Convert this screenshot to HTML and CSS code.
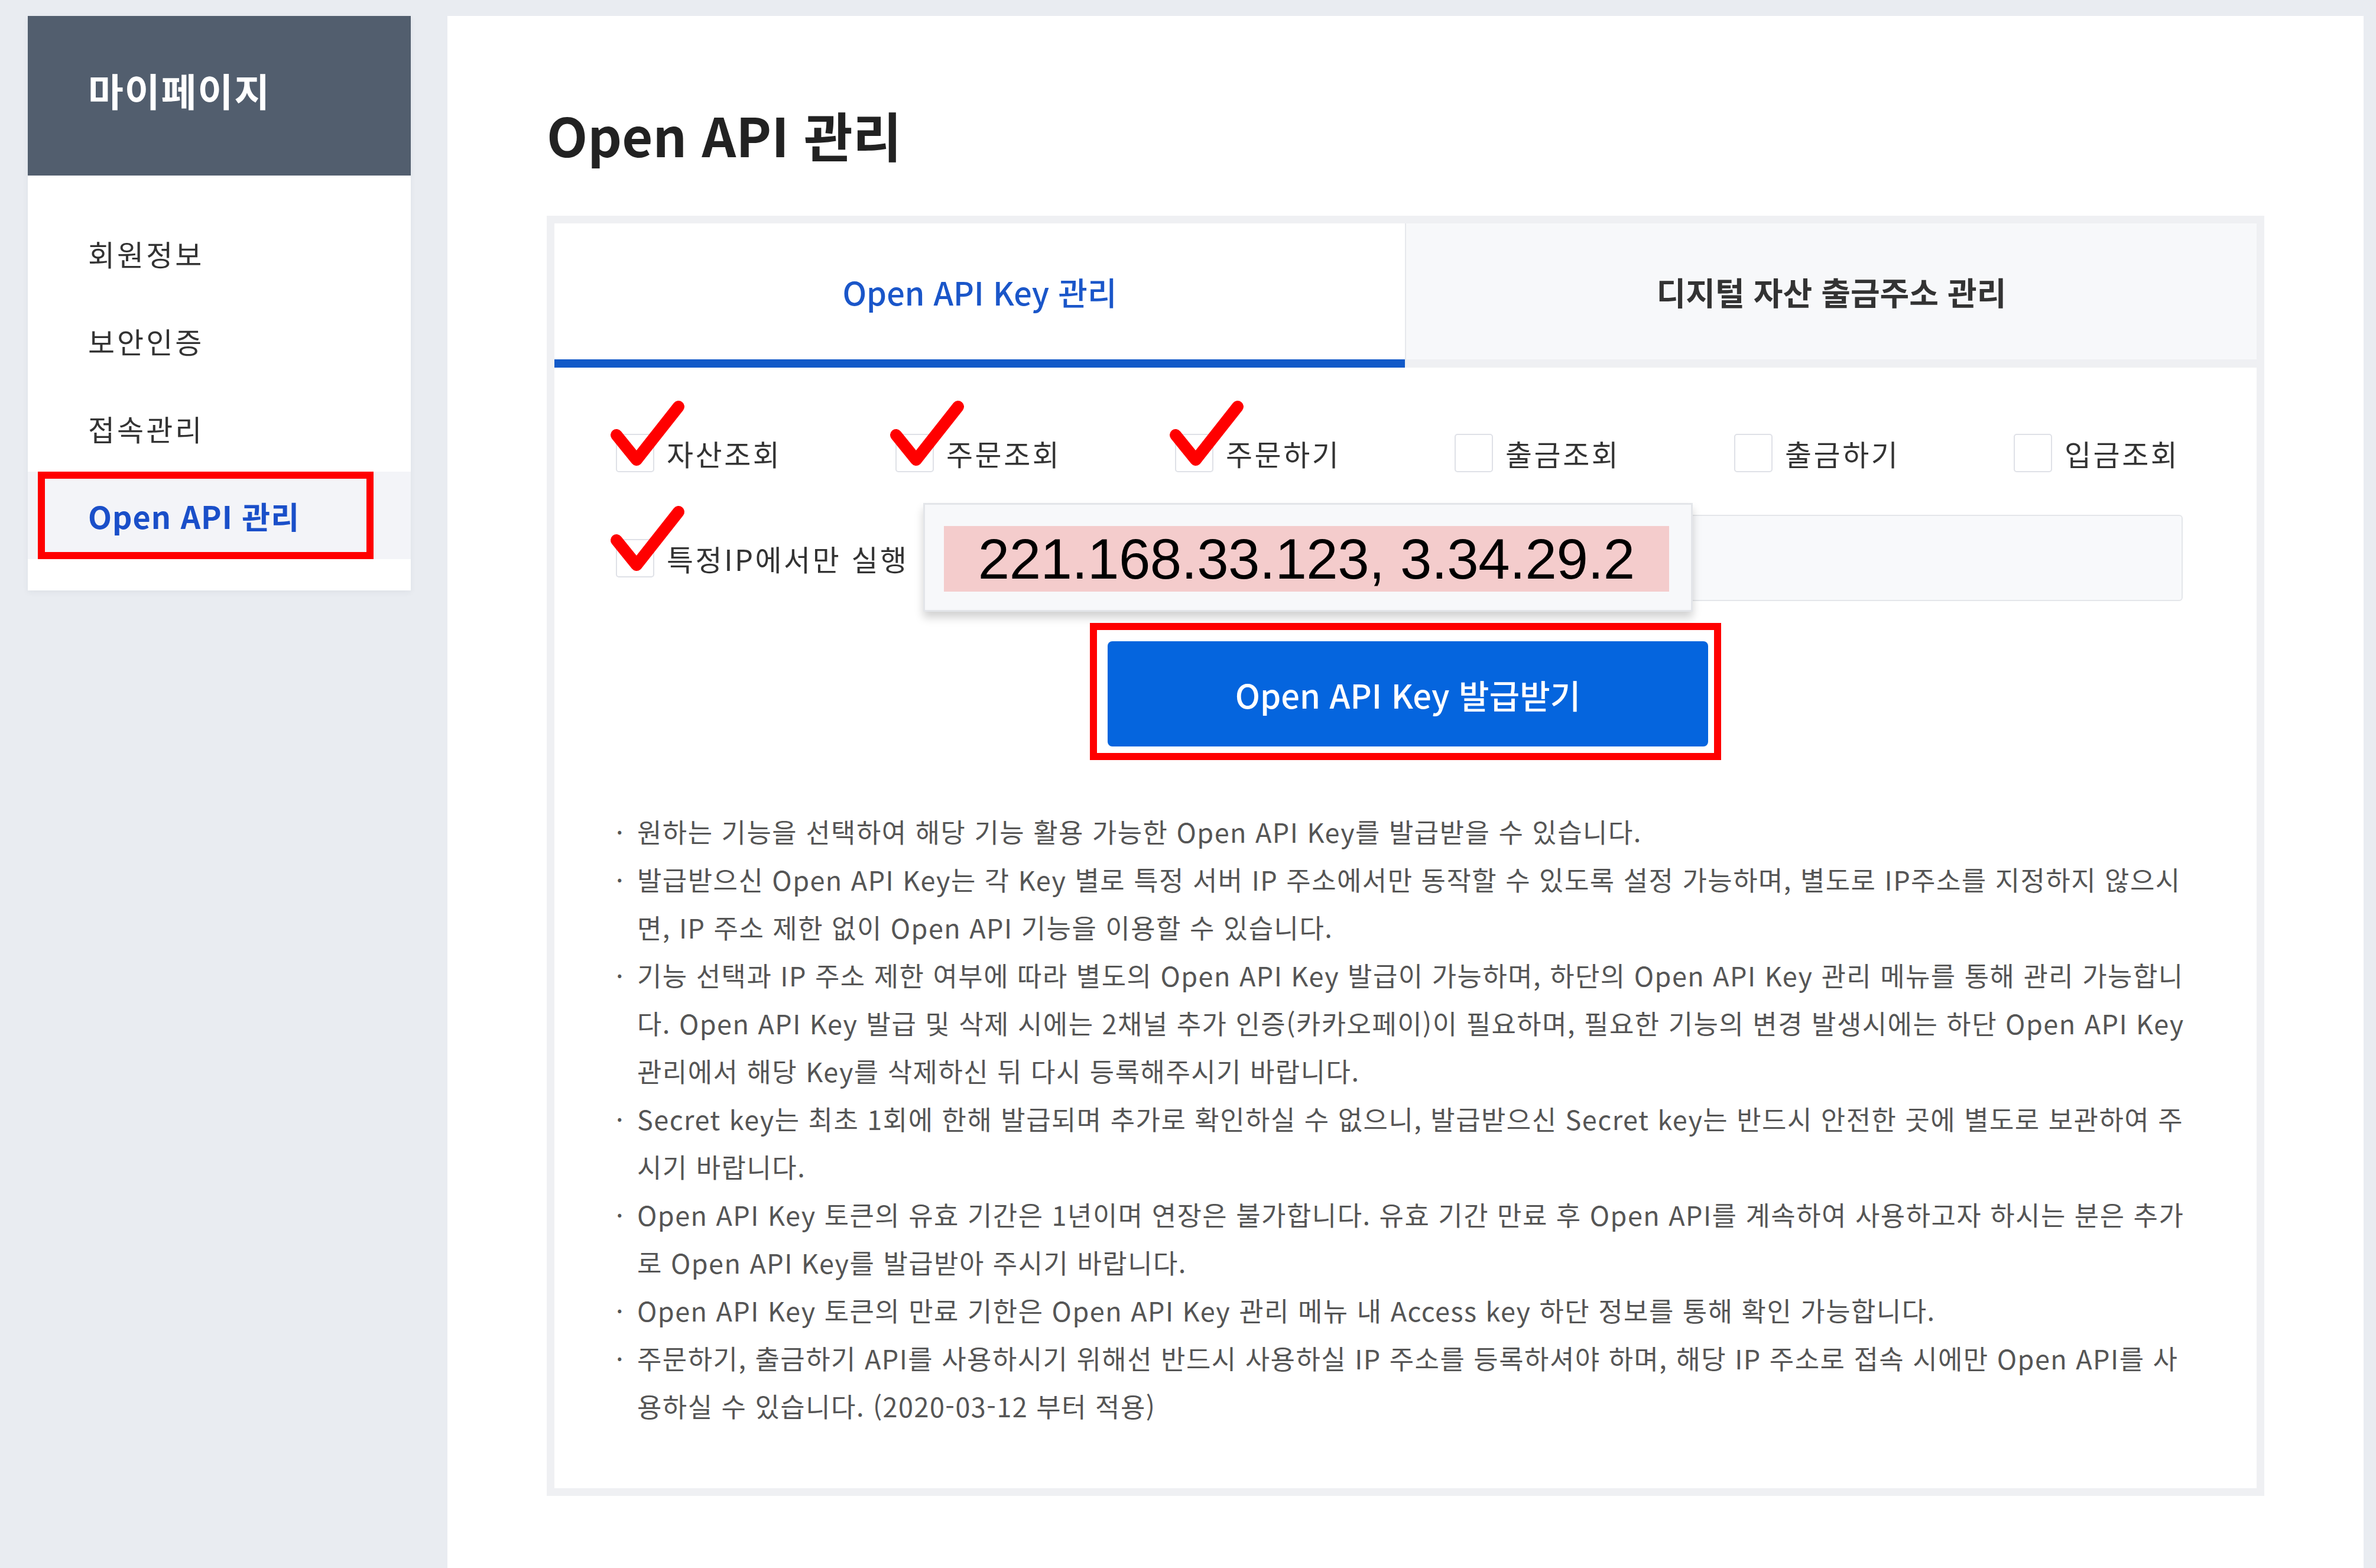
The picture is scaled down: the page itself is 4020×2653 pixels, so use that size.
FILE: index.html
```html
<!DOCTYPE html>
<html lang="ko">
<head>
  <meta charset="UTF-8">
  <meta name="viewport" content="width=device-width, initial-scale=1.0">
  <title>Open API 관리</title>
  <link rel="stylesheet" href="styles.css">
</head>
<body>
  <div class="page">
    <aside class="sidebar">
      <div class="sidebar-head">마이페이지</div>
      <ul class="side-menu">
        <li><a>회원정보</a></li>
        <li><a>보안인증</a></li>
        <li><a>접속관리</a></li>
        <li class="active"><a>Open API 관리</a></li>
      </ul>
    </aside>

    <main class="content">
      <h1 class="page-title">Open API 관리</h1>

      <div class="panel">
        <div class="tabs">
          <div class="tab active">Open API Key 관리</div>
          <div class="tab">디지털 자산 출금주소 관리</div>
        </div>

        <div class="tab-body">
          <div class="perm-row">
            <label class="perm">
              <span class="box checked"><svg viewBox="0 0 130 125"><path d="M13 60 L47 102 L118 12"/></svg></span>자산조회
            </label>
            <label class="perm">
              <span class="box checked"><svg viewBox="0 0 130 125"><path d="M13 60 L47 102 L118 12"/></svg></span>주문조회
            </label>
            <label class="perm">
              <span class="box checked"><svg viewBox="0 0 130 125"><path d="M13 60 L47 102 L118 12"/></svg></span>주문하기
            </label>
            <label class="perm"><span class="box"></span>출금조회</label>
            <label class="perm"><span class="box"></span>출금하기</label>
            <label class="perm"><span class="box"></span>입금조회</label>
          </div>

          <div class="ip-row">
            <label class="perm">
              <span class="box checked"><svg viewBox="0 0 130 125"><path d="M13 60 L47 102 L118 12"/></svg></span>특정IP에서만 실행
            </label>
            <div class="ip-field">
              <div class="ip-popup">
                <div class="ip-mark"><span class="ip-text">221.168.33.123, 3.34.29.2</span></div>
              </div>
            </div>
          </div>

          <div class="issue-wrap">
            <button class="issue-btn">Open API Key 발급받기</button>
          </div>

          <ul class="notes">
            <li>원하는 기능을 선택하여 해당 기능 활용 가능한 Open API Key를 발급받을 수 있습니다.</li>
            <li>발급받으신 Open API Key는 각 Key 별로 특정 서버 IP 주소에서만 동작할 수 있도록 설정 가능하며, 별도로 IP주소를 지정하지 않으시면, IP 주소 제한 없이 Open API 기능을 이용할 수 있습니다.</li>
            <li>기능 선택과 IP 주소 제한 여부에 따라 별도의 Open API Key 발급이 가능하며, 하단의 Open API Key 관리 메뉴를 통해 관리 가능합니다. Open API Key 발급 및 삭제 시에는 2채널 추가 인증(카카오페이)이 필요하며, 필요한 기능의 변경 발생시에는 하단 Open API Key 관리에서 해당 Key를 삭제하신 뒤 다시 등록해주시기 바랍니다.</li>
            <li>Secret key는 최초 1회에 한해 발급되며 추가로 확인하실 수 없으니, 발급받으신 Secret key는 반드시 안전한 곳에 별도로 보관하여 주시기 바랍니다.</li>
            <li>Open API Key 토큰의 유효 기간은 1년이며 연장은 불가합니다. 유효 기간 만료 후 Open API를 계속하여 사용하고자 하시는 분은 추가로 Open API Key를 발급받아 주시기 바랍니다.</li>
            <li>Open API Key 토큰의 만료 기한은 Open API Key 관리 메뉴 내 Access key 하단 정보를 통해 확인 가능합니다.</li>
            <li>주문하기, 출금하기 API를 사용하시기 위해선 반드시 사용하실 IP 주소를 등록하셔야 하며, 해당 IP 주소로 접속 시에만 Open API를 사용하실 수 있습니다. (2020-03-12 부터 적용)</li>
          </ul>
        </div>
      </div>
    </main>
  </div>
</body>
</html>
```

FILE: styles.css
```css
body {
  margin: 0;
  background-color: #e9ecf1;
  font-family: "Noto Sans CJK KR", "Noto Sans", sans-serif;
  color: #333;
}

.page {
  display: flex;
  align-items: flex-start;
  padding: 27px 21px 0 47px;
}

/* sidebar */
.sidebar {
  width: 648px;
  flex: none;
  margin-right: 62px;
  padding-bottom: 53px;
  background-color: #fff;
  box-shadow: 0 3px 10px rgba(40, 50, 70, 0.06);
}

.sidebar-head {
  height: 270px;
  box-sizing: border-box;
  display: flex;
  align-items: center;
  padding: 0 0 20px 102px;
  background-color: #525e6e;
  color: #fff;
  font-size: 65px;
  font-weight: 700;
  letter-spacing: 2px;
}

.side-menu {
  list-style: none;
  margin: 0;
  padding: 57px 0 0;
}

.side-menu li {
  height: 148px;
  display: flex;
  align-items: center;
  padding-left: 102px;
  font-size: 49px;
  letter-spacing: 4px;
  color: #333;
}

.side-menu li.active {
  padding-left: 17px;
  background-color: #f3f4f8;
}

.side-menu li.active a {
  width: 568px;
  height: 148px;
  box-sizing: border-box;
  display: flex;
  align-items: center;
  padding-left: 73px;
  border: 12px solid #ff0000;
  color: #1a4fc9;
  font-size: 52px;
  font-weight: 700;
  letter-spacing: 1px;
}

/* main */
.content {
  flex: 1;
  min-height: calc(100vh - 27px);
  box-sizing: border-box;
  padding: 146px 168px 0;
  background-color: #fff;
}

.page-title {
  margin: 0 0 84px;
  font-size: 90px;
  line-height: 108px;
  font-weight: 700;
  color: #222;
}

.panel {
  border: 13px solid #eff0f3;
}

.tabs {
  display: flex;
}

.tab {
  flex: 1;
  height: 230px;
  display: flex;
  align-items: center;
  justify-content: center;
  background-color: #f7f8fa;
  border-bottom: 14px solid #eff0f3;
  font-size: 54px;
  font-weight: 700;
  color: #333;
}

.tab + .tab {
  border-left: 2px solid #e6e8ec;
}

.tab.active {
  background-color: #fff;
  border-bottom-color: #1159c8;
  color: #1a56c9;
  font-weight: 500;
}

.tab-body {
  padding: 109px 104px 99px;
}

.perm-row {
  display: grid;
  grid-template-columns: repeat(5, 473px) auto;
}

.perm {
  display: flex;
  align-items: center;
  gap: 21px;
  font-size: 49px;
  letter-spacing: 3.5px;
  color: #333;
  white-space: nowrap;
}

.box {
  position: relative;
  flex: none;
  width: 65px;
  height: 65px;
  box-sizing: border-box;
  border: 2px solid #dfe1e7;
  border-radius: 5px;
  background-color: #fff;
}

.box svg {
  position: absolute;
  left: -14px;
  top: -60px;
  width: 130px;
  height: 125px;
  overflow: visible;
}

.box svg path {
  fill: none;
  stroke: #ff0000;
  stroke-width: 20;
  stroke-linecap: round;
  stroke-linejoin: round;
}

.ip-row {
  display: flex;
  align-items: center;
  margin-top: 69px;
}

.ip-row .perm {
  margin-right: 27px;
}

.ip-field {
  position: relative;
  flex: 1;
  height: 146px;
  box-sizing: border-box;
  margin-right: 21px;
  border: 2px solid #e4e6ea;
  border-radius: 6px;
  background-color: #f8f9fb;
}

.ip-popup {
  position: absolute;
  left: -5px;
  top: -22px;
  width: 1302px;
  height: 184px;
  box-sizing: border-box;
  padding: 36px 0 0 32px;
  border: 3px solid #e3e5e9;
  background-color: #f7f8fa;
  box-shadow: 0 10px 14px rgba(0, 0, 0, 0.18);
}

.ip-mark {
  width: 1227px;
  height: 111px;
  display: flex;
  align-items: center;
  justify-content: center;
  background-color: #f4cccc;
}

.ip-text {
  font-family: "Liberation Sans", Arial, sans-serif;
  font-size: 96px;
  letter-spacing: -0.4px;
  color: #000;
}

.issue-wrap {
  width: 1068px;
  box-sizing: border-box;
  margin: 37px auto 0;
  padding: 19px 10px 11px 18px;
  border: 12px solid #ff0000;
}

.issue-btn {
  display: block;
  width: 100%;
  height: 178px;
  border: none;
  border-radius: 8px;
  background-color: #0565de;
  color: #fff;
  font-family: inherit;
  font-size: 56px;
  font-weight: 500;
}

.notes {
  list-style: none;
  margin: 80px 0 0;
  padding: 0 0 0 36px;
  font-size: 45px;
  letter-spacing: 1.45px;
  line-height: 81px;
  color: #555;
}

.notes li::before {
  content: "·";
  display: inline-block;
  width: 36px;
  margin-left: -36px;
  letter-spacing: 0;
}
```
